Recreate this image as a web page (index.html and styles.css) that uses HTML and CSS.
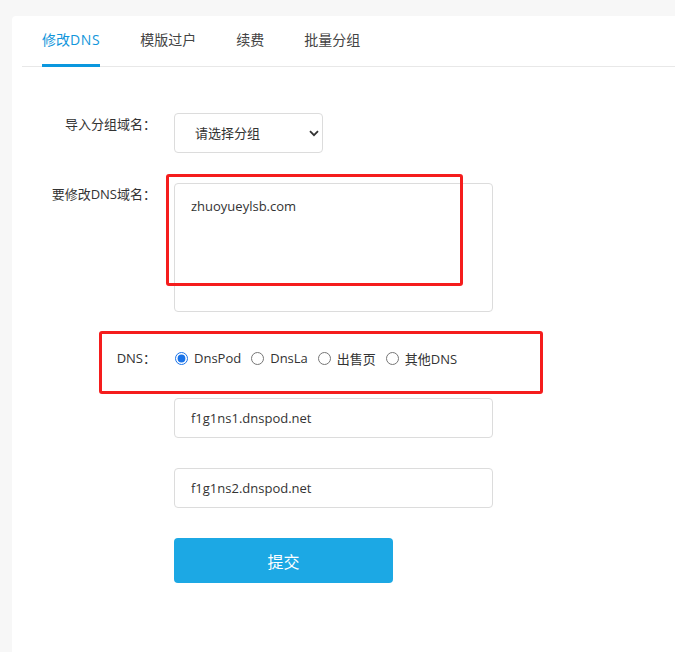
FILE: index.html
```html
<!DOCTYPE html>
<html lang="zh-CN">
<head>
<meta charset="utf-8">
<title>修改DNS</title>
<link rel="stylesheet" href="styles.css">
</head>
<body>
<div class="card">
  <nav class="tabs">
    <a class="tab active"><span>修改<em class="lat">DNS</em></span></a>
    <a class="tab"><span>模版过户</span></a>
    <a class="tab"><span>续费</span></a>
    <a class="tab"><span>批量分组</span></a>
  </nav>

  <form class="form">
    <div class="row row-select">
      <label class="label">导入分组域名：</label>
      <div class="control select-wrap">
        <select class="select">
          <option>请选择分组</option>
        </select>
        <svg class="chevron" width="10" height="7" viewBox="0 0 10 7"><path d="M1 1.2 L5 5.2 L9 1.2" fill="none" stroke="#333" stroke-width="1.8"/></svg>
      </div>
    </div>

    <div class="row row-textarea">
      <label class="label">要修改DNS域名：</label>
      <div class="control">
        <textarea class="textarea">zhuoyueylsb.com</textarea>
      </div>
    </div>

    <div class="row row-dns">
      <label class="label">DNS：</label>
      <div class="control radios">
        <label class="radio"><input type="radio" name="dns" checked><span>DnsPod</span></label>
        <label class="radio"><input type="radio" name="dns"><span>DnsLa</span></label>
        <label class="radio"><input type="radio" name="dns"><span>出售页</span></label>
        <label class="radio"><input type="radio" name="dns"><span>其他DNS</span></label>
      </div>
    </div>

    <div class="row row-input">
      <span class="label"></span>
      <div class="control"><input class="input" type="text" value="f1g1ns1.dnspod.net"></div>
    </div>

    <div class="row row-input">
      <span class="label"></span>
      <div class="control"><input class="input" type="text" value="f1g1ns2.dnspod.net"></div>
    </div>

    <div class="row row-button">
      <span class="label"></span>
      <div class="control"><button class="submit" type="button">提交</button></div>
    </div>
  </form>

  <div class="mark mark-domain"></div>
  <div class="mark mark-dns"></div>
</div>
</body>
</html>
```

FILE: styles.css
```css
* {
  box-sizing: border-box;
}

html, body {
  margin: 0;
  background: #f7f7f7;
}

body {
  padding: 16px 0 0 12px;
  font-family: "Open Sans", "Noto Sans CJK SC", sans-serif;
  font-size: 13px;
  color: #333;
  overflow: hidden;
}

.card {
  position: relative;
  background: #fff;
  border-radius: 4px 0 0 0;
  min-height: 640px;
}

.tabs {
  display: flex;
  margin-left: 10px;
  border-bottom: 1px solid #e8e8e8;
}

.tab {
  display: block;
  padding: 15px 20px 0;
  margin-bottom: -1px;
  font-size: 14px;
  color: #444;
  text-decoration: none;
}

.tab span {
  display: block;
  line-height: 18px;
  padding-bottom: 15px;
  border-bottom: 3px solid transparent;
}

.tab .lat {
  font-style: normal;
  letter-spacing: 0.6px;
}

.tab.active span {
  color: #1296db;
  border-bottom-color: #0b97de;
}

.form {
  display: flex;
  flex-direction: column;
  padding-top: 46px;
}

.row {
  display: flex;
  align-items: flex-start;
  gap: 18px;
}

.label {
  flex: 0 0 144px;
  text-align: right;
  line-height: 22px;
  font-size: 13px;
  color: #333;
}

.control {
  flex: 0 0 319px;
}

.row-select {
  margin-bottom: 30px;
}

.select-wrap {
  position: relative;
  flex: 0 0 149px;
  height: 40px;
}

.select {
  appearance: none;
  -webkit-appearance: none;
  width: 149px;
  height: 40px;
  padding: 0 0 0 20px;
  border: 1px solid #dcdcdc;
  border-radius: 4px;
  background: #fff;
  font-family: inherit;
  font-size: 13px;
  color: #333;
  outline: none;
}

.chevron {
  position: absolute;
  left: 135px;
  top: 17px;
  pointer-events: none;
}

.row-textarea {
  margin-bottom: 35px;
}

.textarea {
  display: block;
  width: 319px;
  height: 129px;
  padding: 13px 16px;
  border: 1px solid #dcdcdc;
  border-radius: 4px;
  font-family: inherit;
  font-size: 13px;
  line-height: 18px;
  color: #333;
  resize: none;
  outline: none;
}

.row-dns {
  margin-bottom: 29px;
}

.radios {
  display: flex;
  align-items: center;
  height: 22px;
}

.radio {
  display: flex;
  align-items: center;
  margin-right: 9px;
  font-size: 13px;
  color: #333;
}

.radio input {
  width: 13px;
  height: 13px;
  margin: 0 6px 0 1px;
  accent-color: #1a73e8;
}

.row-input {
  margin-bottom: 30px;
}

.input {
  display: block;
  width: 319px;
  height: 40px;
  padding: 0 16px;
  border: 1px solid #dcdcdc;
  border-radius: 4px;
  font-family: inherit;
  font-size: 13px;
  color: #333;
  outline: none;
}

.submit {
  display: block;
  width: 219px;
  height: 45px;
  border: 0;
  border-radius: 4px;
  background: #1ca8e4;
  color: #fff;
  font-family: "Noto Sans CJK SC", sans-serif;
  font-size: 16px;
}

.mark {
  position: absolute;
  border: 3px solid #f51d1d;
  border-radius: 3px;
  pointer-events: none;
}

.mark-domain {
  left: 154px;
  top: 158px;
  width: 297px;
  height: 112px;
}

.mark-dns {
  left: 87px;
  top: 315px;
  width: 444px;
  height: 63px;
}
```
